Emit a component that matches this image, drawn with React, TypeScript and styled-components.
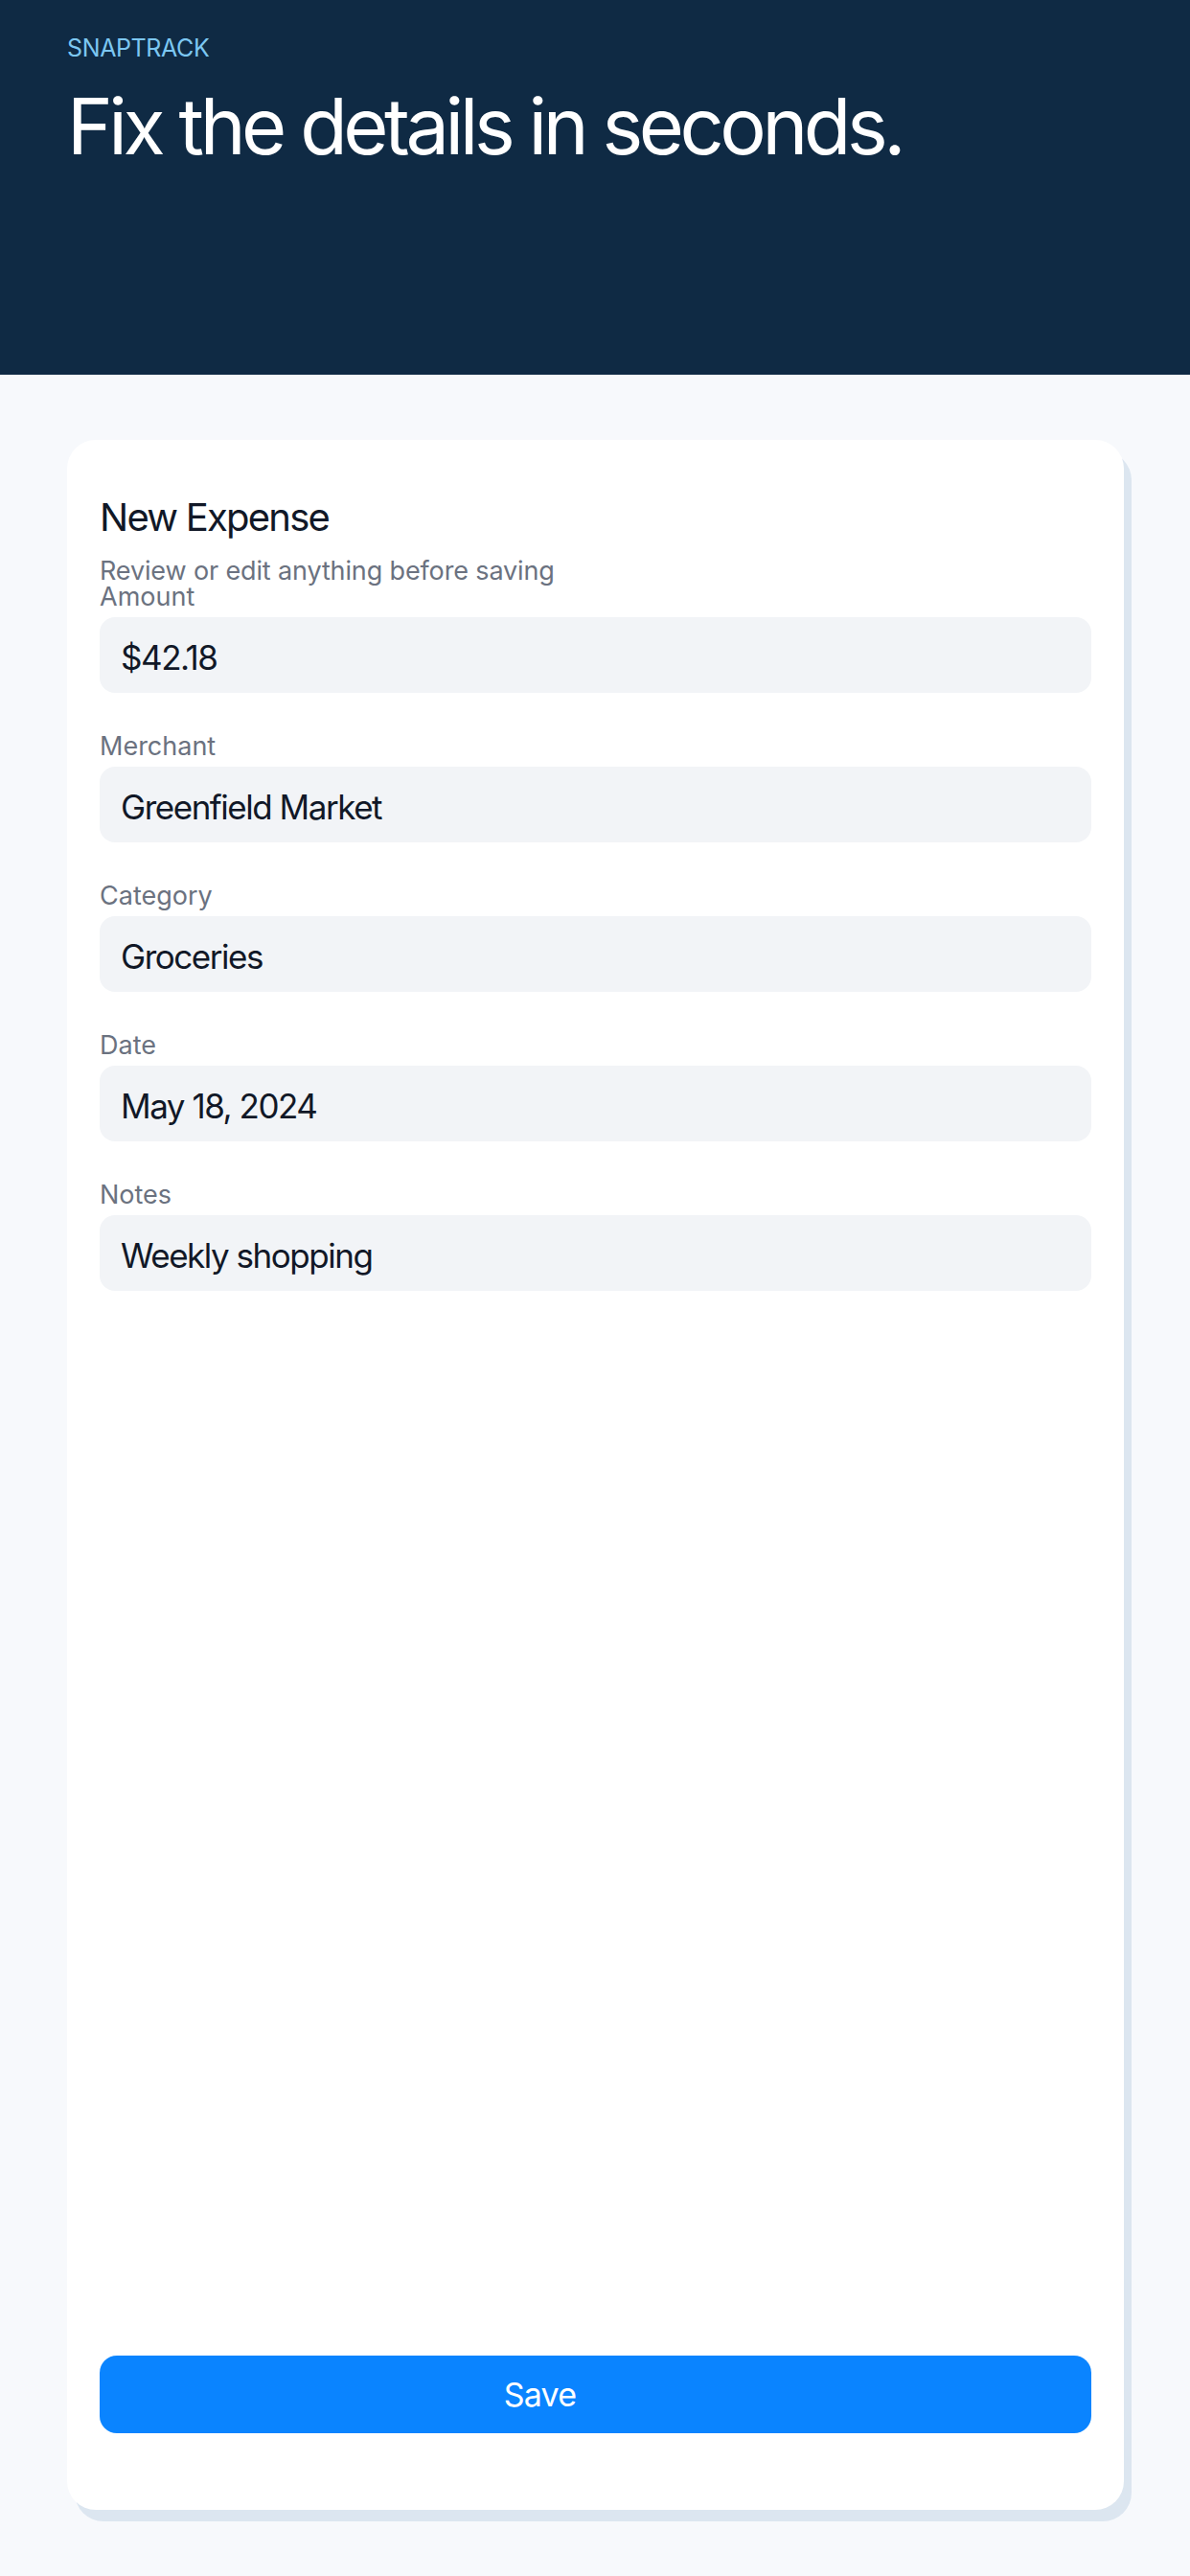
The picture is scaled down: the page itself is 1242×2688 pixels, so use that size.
import React from 'react';
import styled, { createGlobalStyle } from 'styled-components';

const GlobalStyle = createGlobalStyle`
  html, body {
    margin: 0;
    padding: 0;
    background: #f7f9fc;
    font-family: Inter, "Noto Sans", sans-serif;
  }
  * {
    box-sizing: border-box;
  }
`;

const Page = styled.div`
  min-height: 100vh;
  display: flex;
  flex-direction: column;
`;

const Header = styled.header`
  background: #0f2a44;
  height: 391px;
  padding: 38px 70px 0;
  flex-shrink: 0;
`;

const Brand = styled.div`
  color: #7cc7f2;
  font-size: 25px;
  line-height: 1;
  letter-spacing: -0.015em;
`;

const Headline = styled.h1`
  margin: 29px 0 0;
  color: #ffffff;
  font-size: 81px;
  font-weight: 400;
  line-height: 1;
  letter-spacing: -0.055em;
`;

const Main = styled.main`
  flex: 1;
  display: flex;
  flex-direction: column;
  padding: 68px 69px 69px 70px;
`;

const Card = styled.section`
  flex: 1;
  display: flex;
  flex-direction: column;
  background: #ffffff;
  border-radius: 30px;
  box-shadow: 8px 12px 0 #dce6f0;
  padding: 61px 34px 80px;
`;

const Title = styled.h2`
  margin: 0;
  color: #111827;
  font-size: 40px;
  font-weight: 400;
  line-height: 1;
  letter-spacing: -0.044em;
`;

const Subtitle = styled.p`
  margin: 22px 0 0;
  color: #6b7280;
  font-size: 27px;
  line-height: 1;
  letter-spacing: -0.005em;
`;

const Fields = styled.div`
  display: flex;
  flex-direction: column;
  gap: 42px;
`;

const Field = styled.label`
  display: flex;
  flex-direction: column;
  gap: 8px;
`;

const Label = styled.span`
  color: #6b7280;
  font-size: 27px;
  line-height: 1;
  letter-spacing: 0;
`;

const Input = styled.div`
  height: 79px;
  display: flex;
  align-items: center;
  padding: 5px 23px 0 22px;
  background: #f2f4f7;
  border-radius: 16px;
  color: #111827;
  font-size: 35px;
  line-height: 1;
  letter-spacing: -0.042em;
`;

const SaveButton = styled.button`
  margin-top: auto;
  height: 81px;
  border: none;
  border-radius: 18px;
  background: #0a84ff;
  color: #ffffff;
  font-family: inherit;
  font-size: 34px;
  line-height: 1;
  letter-spacing: -0.025em;
  padding: 0 116px 0 0;
  text-align: center;
`;

const fields = [
  { label: 'Amount', value: '$42.18' },
  { label: 'Merchant', value: 'Greenfield Market' },
  { label: 'Category', value: 'Groceries' },
  { label: 'Date', value: 'May 18, 2024' },
  { label: 'Notes', value: 'Weekly shopping' },
];

export default function App() {
  return (
    <Page>
      <GlobalStyle />
      <Header>
        <Brand>SNAPTRACK</Brand>
        <Headline>Fix the details in seconds.</Headline>
      </Header>
      <Main>
        <Card>
          <Title>New Expense</Title>
          <Subtitle>Review or edit anything before saving</Subtitle>
          <Fields>
            {fields.map(f => (
              <Field key={f.label}>
                <Label>{f.label}</Label>
                <Input>{f.value}</Input>
              </Field>
            ))}
          </Fields>
          <SaveButton>Save</SaveButton>
        </Card>
      </Main>
    </Page>
  );
}
